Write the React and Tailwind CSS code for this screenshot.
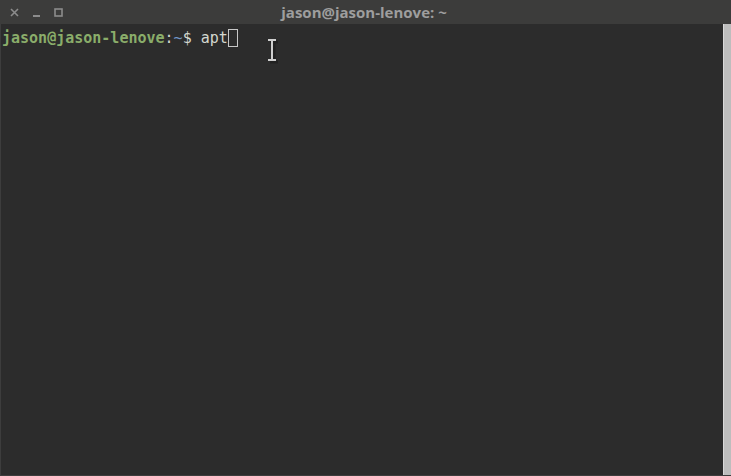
import React from 'react';

const mono = { fontFamily: '"DejaVu Sans Mono", "Liberation Mono", monospace' };

const TitleBar = () => (
  <div className="h-6 bg-[#3c3c3b] flex items-center relative shrink-0">
    <div className="flex items-center gap-[13px] pl-[10px] text-[#8c8c8c]">
      <svg width="9" height="9" viewBox="0 0 9 9">
        <path d="M1 1 L8 8 M8 1 L1 8" stroke="#8c8c8c" strokeWidth="1.6" />
      </svg>
      <svg width="9" height="9" viewBox="0 0 9 9">
        <rect x="1" y="7" width="7" height="2" fill="#8c8c8c" />
      </svg>
      <svg width="9" height="9" viewBox="0 0 9 9">
        <rect x="1" y="1" width="7" height="7" fill="none" stroke="#8c8c8c" strokeWidth="1.6" />
      </svg>
    </div>
    <div
      className="flex-1 text-center text-[15px] font-bold text-[#9e9e9e] pr-[66px]"
      style={{ fontFamily: '"Open Sans", "Noto Sans", sans-serif' }}
    >
      jason@jason-lenove: ~
    </div>
  </div>
);

export default function App() {
  return (
    <div className="w-[731px] h-[476px] flex flex-col bg-[#2c2c2c] overflow-hidden">
      <TitleBar />
      <div className="flex-1 flex border-l border-b border-[#3d3d3d]">
        <div className="flex-1 relative pt-[5px] pl-[1px]">
          <div className="text-[15px] leading-[18px] whitespace-pre flex items-center" style={mono}>
            <span className="font-bold text-[#8aad6a]">jason@jason-lenove</span>
            <span className="text-[#d3d7cf]">:</span>
            <span className="text-[#7196c8]">~</span>
            <span className="text-[#d3d7cf]">$ apt</span>
            <span className="inline-block w-[10px] h-[18px] border border-[#c8c8c8]" />
          </div>
          <svg width="14" height="26" viewBox="0 0 14 26" className="absolute left-[264px] top-[14px]">
            <path d="M3 2 H11 M7 2 V22 M3 22 H11" stroke="#1a1a1a" strokeWidth="3" transform="translate(2 2)" opacity="0.6" />
            <path d="M3 2 H11 M7 2 V22 M3 22 H11" stroke="#cfcfcf" strokeWidth="2" />
          </svg>
        </div>
        <div className="w-[8px] bg-[#bdbdbd] border-l border-[#d8d8d8]" />
      </div>
    </div>
  );
}
